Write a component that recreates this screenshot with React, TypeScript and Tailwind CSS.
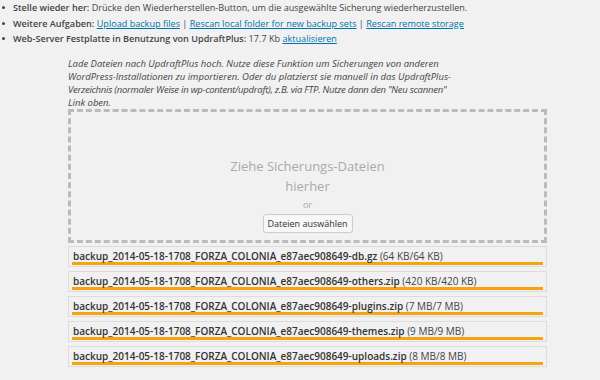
import React from 'react';

const files = [
  { name: 'backup_2014-05-18-1708_FORZA_COLONIA_e87aec908649-db.gz', size: '(64 KB/64 KB)' },
  { name: 'backup_2014-05-18-1708_FORZA_COLONIA_e87aec908649-others.zip', size: '(420 KB/420 KB)' },
  { name: 'backup_2014-05-18-1708_FORZA_COLONIA_e87aec908649-plugins.zip', size: '(7 MB/7 MB)' },
  { name: 'backup_2014-05-18-1708_FORZA_COLONIA_e87aec908649-themes.zip', size: '(9 MB/9 MB)' },
  { name: 'backup_2014-05-18-1708_FORZA_COLONIA_e87aec908649-uploads.zip', size: '(8 MB/8 MB)' },
];

const Bullet: React.FC<{ children: React.ReactNode }> = ({ children }) => (
  <li className="flex items-center">
    <span className="w-[12px] shrink-0 flex justify-start pl-[1px]">
      <span className="block w-[3px] h-[3px] rounded-full bg-[#444]" />
    </span>
    <span>{children}</span>
  </li>
);

const A: React.FC<{ children: React.ReactNode }> = ({ children }) => (
  <a href="#" className="text-[#0073aa] underline">{children}</a>
);

export default function App() {
  return (
    <div
      className="w-[600px] h-[380px] overflow-hidden bg-[#f1f1f1] text-[#444]"
      style={{ fontFamily: '"Open Sans", "Noto Sans", sans-serif' }}
    >
      <ul className="text-[9.1px] leading-[15.5px] ml-[1px]">
        <Bullet>
          <span className="font-semibold">Stelle wieder her:</span> Drücke den Wiederherstellen-Button, um die ausgewählte Sicherung wiederherzustellen.
        </Bullet>
        <Bullet>
          <span className="font-semibold">Weitere Aufgaben:</span> <A>Upload backup files</A> | <A>Rescan local folder for new backup sets</A> | <A>Rescan remote storage</A>
        </Bullet>
        <Bullet>
          <span className="font-semibold">Web-Server Festplatte in Benutzung von UpdraftPlus:</span> 17.7 Kb <A>aktualisieren</A>
        </Bullet>
      </ul>

      <div className="ml-[68px] w-[479px] mt-[10px]">
        <p className="italic text-[9.5px] leading-[13px] text-[#444] whitespace-nowrap">
          Lade Dateien nach UpdraftPlus hoch. Nutze diese Funktion um Sicherungen von anderen<br />
          WordPress-Installationen zu importieren. Oder du platzierst sie manuell in das UpdraftPlus-<br />
          <span className="tracking-[-0.25px]">Verzeichnis (normaler Weise in wp-content/updraft), z.B. via FTP. Nutze dann den "Neu scannen"</span><br />
          Link oben.
        </p>

        <div className="h-[134px] border-[3px] border-dashed border-[#bbbbbb] flex flex-col items-center pt-[44px]">
          <div className="w-[160px] text-center text-[13px] leading-[20px] text-[#aaa]">
            Ziehe Sicherungs-Dateien hierher
          </div>
          <div className="text-[9px] leading-[12px] text-[#aaa] mt-[3px]">or</div>
          <button className="mt-[3px] h-[19px] w-[90px] text-[9px] text-[#333] bg-[#f7f7f7] border border-[#ccc] rounded-[3px] leading-none">
            Dateien auswählen
          </button>
        </div>

        <div className="mt-[3px] flex flex-col gap-[4px]">
          {files.map((f) => (
            <div key={f.name} className="h-[21px] border border-[#dcdcdc] px-[3px] pt-[3px]">
              <div className="text-[10px] leading-[12px] pl-[1px] whitespace-nowrap">
                <span className="font-semibold text-[#333]">{f.name}</span> <span>{f.size}</span>
              </div>
              <div className="h-[3px] bg-[#f7a30f]" />
            </div>
          ))}
        </div>
      </div>
    </div>
  );
}
